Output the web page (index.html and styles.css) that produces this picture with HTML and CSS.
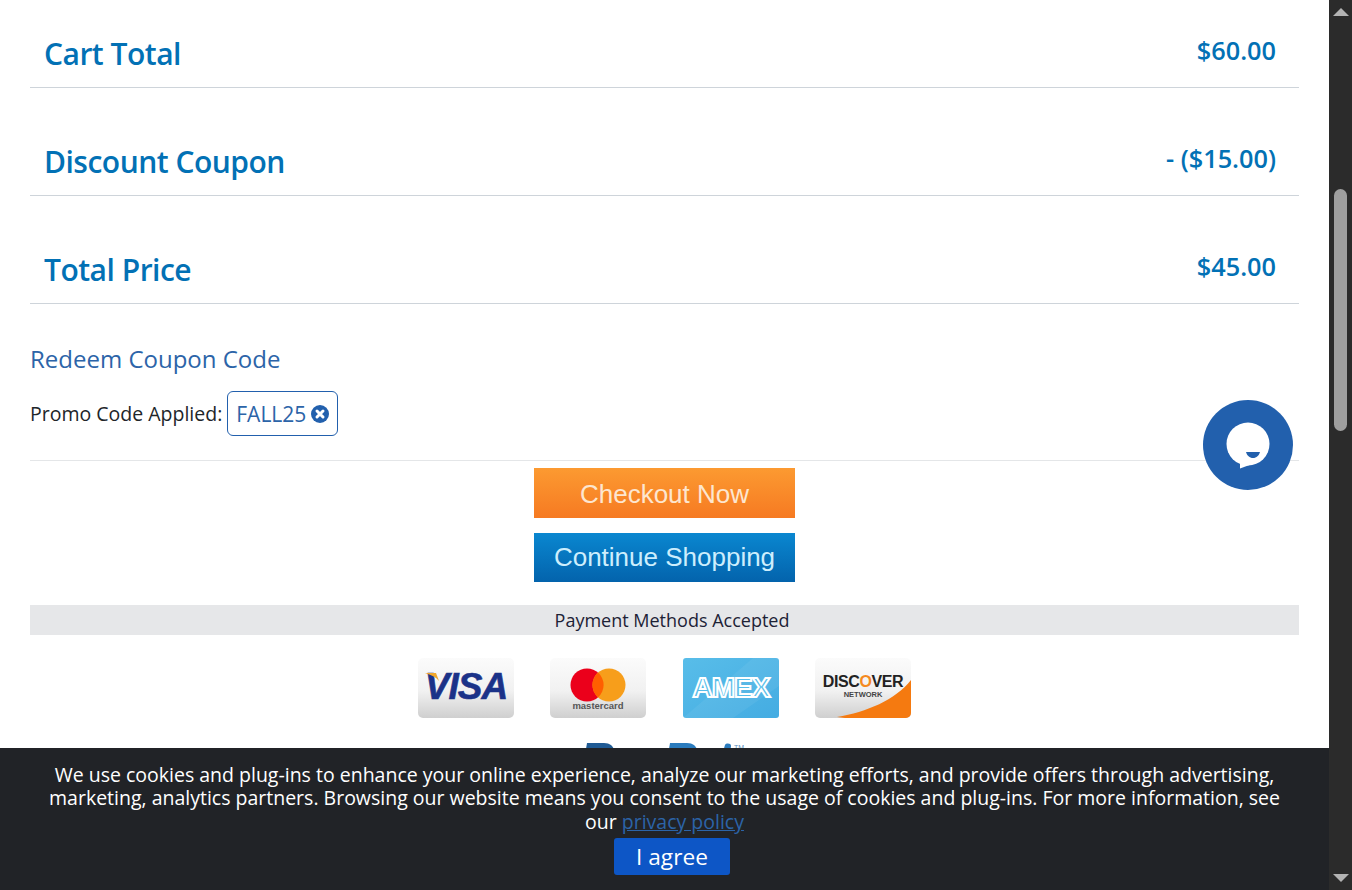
FILE: index.html
```html
<!DOCTYPE html>
<html lang="en">
<head>
    <meta charset="UTF-8">
    <meta name="viewport" content="width=device-width, initial-scale=1.0">
    <title>Shopping Cart</title>
    <link rel="stylesheet" href="styles.css">
</head>
<body>
    <div class="window">
        <main class="page">
            <div class="total-row">
                <h3>Cart Total</h3>
                <span class="amount">$60.00</span>
            </div>
            <div class="total-row">
                <h3>Discount Coupon</h3>
                <span class="amount">- ($15.00)</span>
            </div>
            <div class="total-row">
                <h3>Total Price</h3>
                <span class="amount">$45.00</span>
            </div>

            <section class="coupon">
                <a href="#" class="coupon-link">Redeem Coupon Code</a>
                <div class="promo">
                    <span>Promo Code Applied:</span>
                    <span class="promo-tag">FALL25
                        <svg class="promo-x" viewBox="0 0 18 18" width="18" height="18">
                            <circle cx="9" cy="9" r="9" fill="#2260ad"/>
                            <path d="M6 6l6 6M12 6l-6 6" stroke="#fff" stroke-width="3" stroke-linecap="round"/>
                        </svg>
                    </span>
                </div>
            </section>

            <div class="actions">
                <a href="#" class="img-btn orange">Checkout Now</a>
                <a href="#" class="img-btn blue">Continue Shopping</a>
            </div>

            <div class="pay-title">Payment Methods Accepted</div>

            <div class="cards">
                <svg class="card" viewBox="0 0 96 60">
                    <defs>
                        <linearGradient id="silver" x1="0" y1="0" x2="0" y2="1">
                            <stop offset="0" stop-color="#fbfbfb"/>
                            <stop offset="0.55" stop-color="#f1f1f1"/>
                            <stop offset="1" stop-color="#cfcfcf"/>
                        </linearGradient>
                        <linearGradient id="sky" x1="0" y1="0" x2="1" y2="1">
                            <stop offset="0" stop-color="#58bde9"/>
                            <stop offset="1" stop-color="#44ace2"/>
                        </linearGradient>
                    </defs>
                    <rect width="96" height="60" rx="5" fill="url(#silver)"/>
                    <text x="48" y="41" class="visa-text">VISA</text>
                    <path d="M7 15h11l3 8c-3-4-8-6-14-8z" fill="#f0a72c"/>
                </svg>
                <svg class="card" viewBox="0 0 96 60">
                    <rect width="96" height="60" rx="5" fill="url(#silver)"/>
                    <circle cx="37" cy="27" r="16.5" fill="#eb001b"/>
                    <circle cx="59" cy="27" r="16.5" fill="#f79e1b"/>
                    <path d="M48 14.600a16.500 16.500 0 0 1 0 24.800a16.500 16.500 0 0 1 0-24.800z" fill="#ff5f00"/>
                    <text x="48" y="51" class="mc-text">mastercard</text>
                </svg>
                <svg class="card" viewBox="0 0 96 60">
                    <rect width="96" height="60" rx="3" fill="url(#sky)"/>
                    <path d="M0 60L70 0h26v28L50 60z" fill="#fff" opacity=".06"/>
                    <text x="48" y="39" class="amex-text">AMEX</text>
                </svg>
                <svg class="card" viewBox="0 0 96 60">
                    <rect width="96" height="60" rx="5" fill="url(#silver)"/>
                    <path d="M22 59C52 54 80 42 96 22v33a5 5 0 0 1-5 5H30z" fill="#f57a10"/>
                    <text x="48" y="29" class="disc-text">DISC<tspan fill="#f58a1f">O</tspan>VER</text>
                    <text x="48" y="39" class="net-text">NETWORK</text>
                </svg>
            </div>

            <div class="paypal">
                <svg viewBox="0 0 170 12" width="170" height="12">
                    <path d="M5 12L7 0h17c6 0 9 3 10 7l1 5z" fill="#1f5a94"/>
                    <path d="M88 12l2-12h17c6 0 9 3 10 7l1 5z" fill="#2a7bbd"/>
                    <path d="M142 12l3-10c1-2 6-2 6 1l-1 9z" fill="#2a7bbd"/>
                    <text x="154" y="7" class="pp-text">TM</text>
                </svg>
            </div>

            <button class="chat-btn" aria-label="Chat">
                <svg viewBox="0 0 90 90" width="90" height="90">
                    <circle cx="45" cy="44" r="21.500" fill="#fff"/>
                    <path d="M37 58L37 68.500L52 63z" fill="#fff"/>
                    <path d="M43 52h14c-1 3.600-3.500 6-7 6s-6-2.400-7-6z" fill="#2260ad"/>
                </svg>
            </button>

            <div class="cookie-bar">
                <p>We use cookies and plug-ins to enhance your online experience, analyze our marketing efforts, and provide offers through advertising, marketing, analytics partners. Browsing our website means you consent to the usage of cookies and plug-ins. For more information, see our <a href="#">privacy policy</a></p>
                <div class="agree-wrap">
                    <button class="agree">I agree</button>
                </div>
            </div>
        </main>

        <div class="scrollbar">
            <span class="arrow up"></span>
            <div class="track"><div class="thumb"></div></div>
            <span class="arrow down"></span>
        </div>
    </div>
</body>
</html>
```

FILE: styles.css
```css
* {
    margin: 0;
    padding: 0;
    box-sizing: border-box;
}

html, body {
    height: 100%;
    overflow: hidden;
}

body {
    font-family: 'Open Sans', sans-serif;
    background: #fff;
    color: #212529;
}

.window {
    display: flex;
    height: 890px;
}

.page {
    position: relative;
    flex: 1;
    overflow: hidden;
    padding: 0 30px;
}

/* totals */
.total-row {
    display: flex;
    justify-content: space-between;
    height: 88px;
    margin-bottom: 20px;
    padding: 0 23px 0 14px;
    border-bottom: 1px solid #ced4da;
    color: #0271b5;
}

.total-row h3 {
    font-size: 30px;
    font-weight: 600;
    line-height: 41px;
    padding-top: 33px;
    letter-spacing: -0.5px;
}

.total-row .amount {
    font-size: 25.3px;
    font-weight: 600;
    line-height: 34px;
    padding-top: 33px;
}

/* coupon */
.coupon {
    margin-top: -20px;
    padding-top: 38px;
    height: 157px;
    border-bottom: 1px solid #e4e6e8;
}

.coupon-link {
    display: block;
    color: #2c64a8;
    font-size: 24px;
    line-height: 34px;
    text-decoration: none;
}

.promo {
    display: flex;
    align-items: center;
    gap: 5px;
    margin-top: 15px;
    font-size: 19.5px;
}

.promo-tag {
    display: inline-flex;
    align-items: center;
    gap: 5px;
    height: 45px;
    padding: 0 8px;
    border: 1px solid #2260ad;
    border-radius: 6px;
    color: #2c64a8;
    font-size: 21px;
}

/* image style buttons */
.actions {
    display: flex;
    flex-direction: column;
    align-items: center;
    gap: 15px;
    margin-top: 7px;
}

.img-btn {
    display: block;
    width: 261px;
    height: 50px;
    font-family: 'Liberation Sans', Arial, sans-serif;
    font-size: 26px;
    text-align: center;
    text-decoration: none;
}

.orange {
    background: linear-gradient(#fc9a31, #f67a22);
    color: #fde6cf;
    line-height: 53px;
}

.blue {
    height: 49px;
    background: linear-gradient(#0a87d0, #0363ac);
    color: #cdeefd;
    line-height: 49px;
}

.pay-title {
    margin-top: 23px;
    height: 30px;
    padding-left: 15px;
    background: #e6e7e9;
    color: #1d2236;
    font-size: 18px;
    line-height: 30px;
    text-align: center;
}

.cards {
    display: flex;
    justify-content: center;
    gap: 36.33px;
    margin-top: 23px;
}

.card {
    display: block;
    width: 96px;
    height: 60px;
}

.visa-text {
    font: italic 700 37px 'Liberation Sans', sans-serif;
    fill: #1b3288;
    stroke: #1b3288;
    stroke-width: 0.6px;
    text-anchor: middle;
    letter-spacing: -1px;
}

.mc-text {
    font: 700 9.5px 'Liberation Sans', sans-serif;
    fill: #555;
    text-anchor: middle;
}

.amex-text {
    font: 700 28px 'Liberation Sans', sans-serif;
    fill: #58bde9;
    stroke: #fff;
    stroke-width: 2px;
    text-anchor: middle;
    letter-spacing: -1px;
}

.disc-text {
    font: 700 16px 'Liberation Sans', sans-serif;
    fill: #222;
    text-anchor: middle;
    letter-spacing: -0.4px;
}

.net-text {
    font: 700 7.500px 'Liberation Sans', sans-serif;
    fill: #444;
    text-anchor: middle;
}

.paypal {
    display: flex;
    justify-content: center;
    margin-top: 25px;
}

.pp-text {
    font: 7px 'Liberation Sans', sans-serif;
    fill: #5b8fc0;
}

/* floating chat */
.chat-btn {
    position: absolute;
    left: 1203px;
    top: 400px;
    width: 90px;
    height: 90px;
    border: none;
    border-radius: 50%;
    background: #2260ad;
}

.chat-btn svg {
    display: block;
}

/* cookie bar */
.cookie-bar {
    position: absolute;
    left: 0;
    right: 0;
    bottom: 0;
    height: 142px;
    padding: 15px 40px 0;
    background: #212327;
    color: #fff;
    font-size: 19.5px;
    line-height: 23.4px;
    text-align: center;
}

.cookie-bar a {
    color: #2c64a8;
}

.agree-wrap {
    display: flex;
    justify-content: center;
    margin-top: 5px;
    padding-left: 15px;
}

.agree {
    width: 116px;
    height: 37px;
    border: none;
    border-radius: 3px;
    background: #0d56c6;
    color: #fff;
    font-family: inherit;
    font-size: 22.7px;
}

/* fake scrollbar */
.scrollbar {
    display: flex;
    flex-direction: column;
    align-items: center;
    width: 23px;
    background: #2b2b2b;
}

.arrow {
    flex: none;
    width: 0;
    height: 0;
    border-left: 8px solid transparent;
    border-right: 8px solid transparent;
}

.arrow.up {
    margin-top: 8px;
    border-bottom: 8px solid #b3b3b3;
}

.arrow.down {
    margin-bottom: 8px;
    border-top: 8px solid #b3b3b3;
}

.track {
    flex: 1;
    width: 100%;
    padding-top: 173px;
}

.thumb {
    width: 13px;
    height: 242px;
    margin: 0 auto;
    border-radius: 7px;
    background: #9f9f9f;
}
```
